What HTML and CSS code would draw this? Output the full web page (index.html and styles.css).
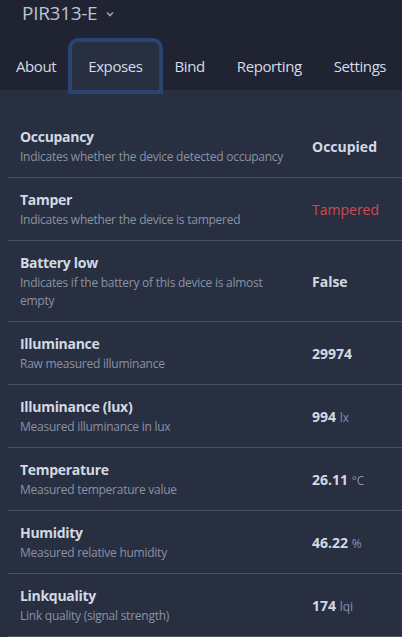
FILE: index.html
```html
<!DOCTYPE html>
<html lang="en">
<head>
    <meta charset="UTF-8">
    <meta name="viewport" content="width=device-width, initial-scale=1.0">
    <title>PIR313-E - Exposes</title>
    <link rel="stylesheet" href="styles.css">
</head>
<body>
    <div class="header">
        <div class="device-title">
            PIR313-E
            <svg class="chevron" width="8" height="6" viewBox="0 0 8 6"><path d="M1 1.5 L4 4.5 L7 1.5" fill="none" stroke="currentColor" stroke-width="1.6"/></svg>
        </div>
        <div class="tabs">
            <a class="tab">About</a>
            <a class="tab active">Exposes</a>
            <a class="tab">Bind</a>
            <a class="tab">Reporting</a>
            <a class="tab">Settings</a>
        </div>
    </div>

    <div class="content">
        <div class="row">
            <div class="label">
                <div class="name">Occupancy</div>
                <div class="desc">Indicates whether the device detected occupancy</div>
            </div>
            <div class="value">Occupied</div>
        </div>
        <div class="row">
            <div class="label">
                <div class="name">Tamper</div>
                <div class="desc">Indicates whether the device is tampered</div>
            </div>
            <div class="value alert">Tampered</div>
        </div>
        <div class="row">
            <div class="label">
                <div class="name">Battery low</div>
                <div class="desc">Indicates if the battery of this device is almost empty</div>
            </div>
            <div class="value">False</div>
        </div>
        <div class="row">
            <div class="label">
                <div class="name">Illuminance</div>
                <div class="desc">Raw measured illuminance</div>
            </div>
            <div class="value">29974</div>
        </div>
        <div class="row">
            <div class="label">
                <div class="name">Illuminance (lux)</div>
                <div class="desc">Measured illuminance in lux</div>
            </div>
            <div class="value">994 <span class="unit">lx</span></div>
        </div>
        <div class="row">
            <div class="label">
                <div class="name">Temperature</div>
                <div class="desc">Measured temperature value</div>
            </div>
            <div class="value">26.11 <span class="unit">°C</span></div>
        </div>
        <div class="row">
            <div class="label">
                <div class="name">Humidity</div>
                <div class="desc">Measured relative humidity</div>
            </div>
            <div class="value">46.22 <span class="unit">%</span></div>
        </div>
        <div class="row">
            <div class="label">
                <div class="name">Linkquality</div>
                <div class="desc">Link quality (signal strength)</div>
            </div>
            <div class="value">174 <span class="unit">lqi</span></div>
        </div>
    </div>
</body>
</html>
```

FILE: styles.css
```css
body {
    margin: 0;
    font-family: "Open Sans", "Noto Sans", sans-serif;
    background: #282f41;
    color: #d3d9e3;
}
.header {
    background: #1f2332;
    height: 90px;
}
.device-title {
    padding: 2px 0 0 22px;
    font-size: 19px;
    line-height: 22px;
    letter-spacing: -0.3px;
    color: #bcc4d1;
    display: flex;
    align-items: center;
    gap: 9px;
}
.chevron {
    color: #9aa2b0;
    margin-top: 1px;
}
.tabs {
    display: flex;
    margin-top: 18px;
}
.tab {
    padding: 12px 16px;
    font-size: 15px;
    line-height: 24px;
    letter-spacing: -0.4px;
    color: #d6dce6;
    border-radius: 6px 6px 0 0;
}
.tab.active {
    background: #282f41;
    box-shadow: 0 0 0 4px #2a4470;
    position: relative;
    z-index: 1;
}
.content {
    padding: 25px 0 0 8px;
}
.row {
    display: flex;
    align-items: center;
    padding: 11px 0 11px 12px;
    border-bottom: 1px solid #4a5164;
}
.label {
    flex: 1;
    padding-right: 20px;
}
.name {
    font-size: 14px;
    font-weight: 700;
    line-height: 22px;
    letter-spacing: -0.3px;
}
.desc {
    font-size: 12px;
    line-height: 18px;
    letter-spacing: -0.25px;
    color: #8a92a3;
}
.value {
    width: 90px;
    font-size: 14px;
    font-weight: 700;
}
.value.alert {
    font-weight: 400;
    color: #d04b4d;
}
.unit {
    font-size: 12px;
    font-weight: 400;
    color: #8a92a3;
}
```
